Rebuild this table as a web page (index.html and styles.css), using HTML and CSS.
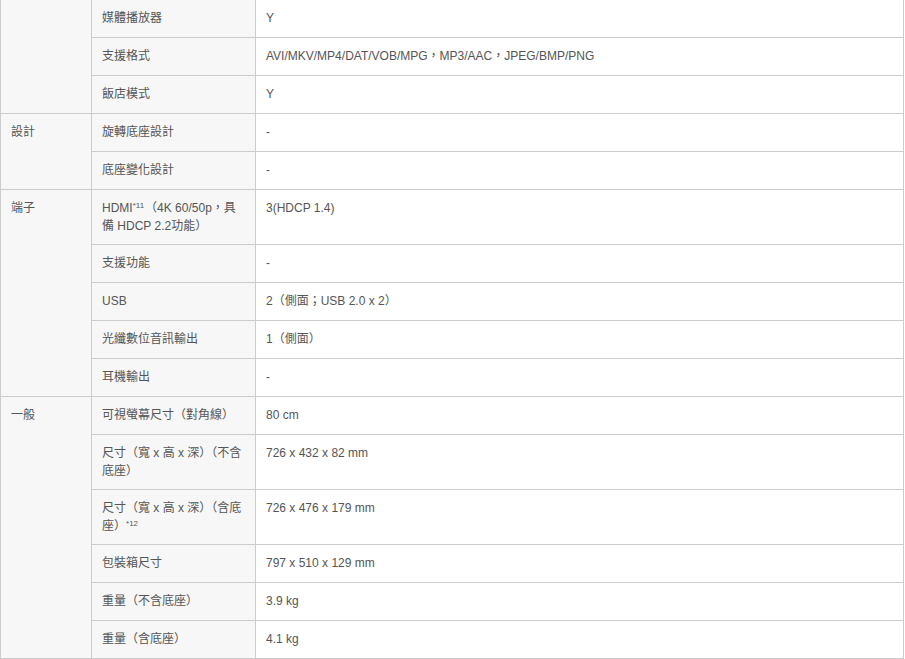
FILE: index.html
```html
<!DOCTYPE html>
<html lang="zh-Hant">
<head>
<meta charset="utf-8">
<title>規格</title>
<link rel="stylesheet" href="styles.css">
</head>
<body>
<table class="spec">
  <colgroup>
    <col class="c-cat">
    <col class="c-key">
    <col class="c-val">
  </colgroup>
  <tbody>
    <tr class="first">
      <td class="cat" rowspan="3"></td>
      <td class="key">媒體播放器</td>
      <td class="val">Y</td>
    </tr>
    <tr>
      <td class="key">支援格式</td>
      <td class="val">AVI/MKV/MP4/DAT/VOB/MPG，MP3/AAC，JPEG/BMP/PNG</td>
    </tr>
    <tr>
      <td class="key">飯店模式</td>
      <td class="val">Y</td>
    </tr>
    <tr>
      <td class="cat" rowspan="2">設計</td>
      <td class="key">旋轉底座設計</td>
      <td class="val">-</td>
    </tr>
    <tr>
      <td class="key">底座變化設計</td>
      <td class="val">-</td>
    </tr>
    <tr>
      <td class="cat" rowspan="5">端子</td>
      <td class="key two">HDMI<sup>*11</sup>（4K 60/50p，具備 HDCP 2.2功能）</td>
      <td class="val">3(HDCP 1.4)</td>
    </tr>
    <tr>
      <td class="key">支援功能</td>
      <td class="val">-</td>
    </tr>
    <tr>
      <td class="key">USB</td>
      <td class="val">2（側面；USB 2.0 x 2）</td>
    </tr>
    <tr>
      <td class="key">光纖數位音訊輸出</td>
      <td class="val">1（側面）</td>
    </tr>
    <tr>
      <td class="key">耳機輸出</td>
      <td class="val">-</td>
    </tr>
    <tr>
      <td class="cat" rowspan="6">一般</td>
      <td class="key">可視螢幕尺寸（對角線）</td>
      <td class="val">80 cm</td>
    </tr>
    <tr>
      <td class="key two">尺寸（寬 x 高 x 深）（不含底座）</td>
      <td class="val">726 x 432 x 82 mm</td>
    </tr>
    <tr>
      <td class="key two">尺寸（寬 x 高 x 深）（含底座）<sup>*12</sup></td>
      <td class="val">726 x 476 x 179 mm</td>
    </tr>
    <tr>
      <td class="key">包裝箱尺寸</td>
      <td class="val">797 x 510 x 129 mm</td>
    </tr>
    <tr>
      <td class="key">重量（不含底座）</td>
      <td class="val">3.9 kg</td>
    </tr>
    <tr>
      <td class="key">重量（含底座）</td>
      <td class="val">4.1 kg</td>
    </tr>
  </tbody>
</table>
</body>
</html>
```

FILE: styles.css
```css
html, body {
  margin: 0;
  padding: 0;
  background: #ffffff;
}

body {
  font-family: "Liberation Sans", "Noto Sans CJK TC", Arial, sans-serif;
  font-size: 12px;
  color: #555555;
}

.spec {
  border-collapse: collapse;
  table-layout: fixed;
  width: 904px;
}

.c-cat { width: 91px; }
.c-key { width: 164px; }
.c-val { width: auto; }

.spec td {
  border: 1px solid #cccccc;
  padding: 9px 10px 10px 10px;
  line-height: 18px;
  vertical-align: top;
  text-align: left;
}

.spec td.two {
  padding-bottom: 9px;
}

.spec tr.first td {
  border-top: none;
}

.cat,
.key {
  background: #f7f7f7;
}

.val {
  background: #ffffff;
}

.spec sup {
  font-size: 8px;
  line-height: 0;
  vertical-align: 4px;
  margin-right: 1px;
}
```
